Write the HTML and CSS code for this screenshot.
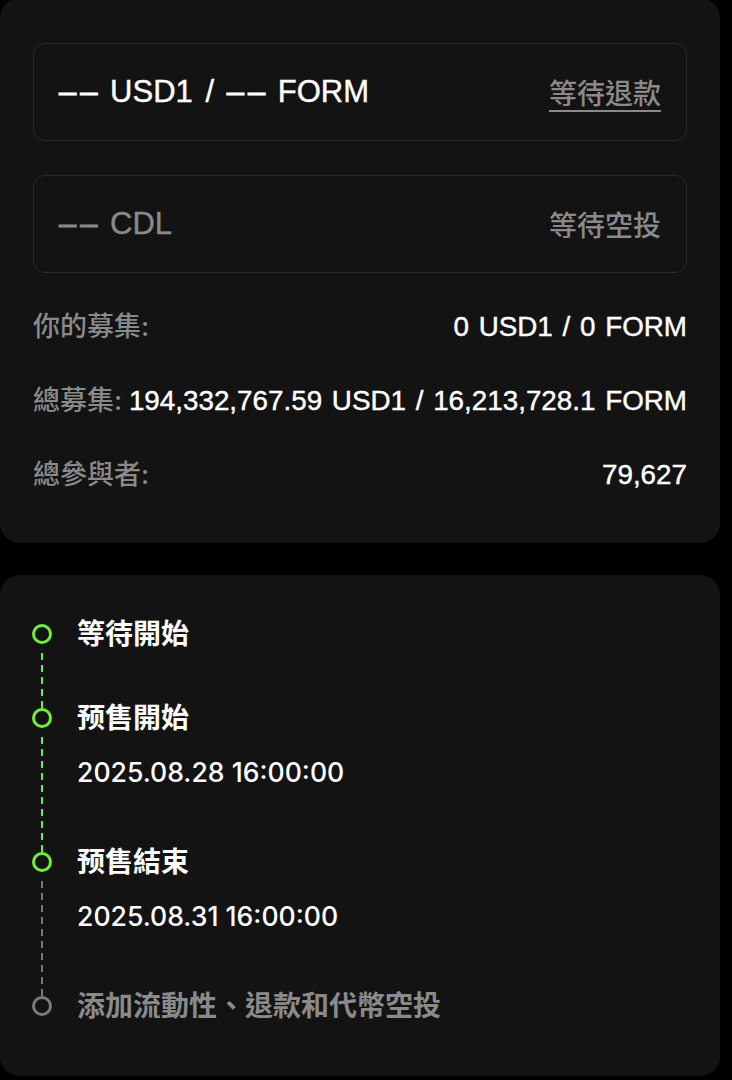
FILE: index.html
```html
<!DOCTYPE html>
<html lang="zh-Hant">
<head>
    <meta charset="UTF-8">
    <meta name="viewport" content="width=device-width, initial-scale=1.0">
    <title>Presale</title>
    <link rel="stylesheet" href="styles.css">
</head>
<body>
    <div class="card summary">
        <div class="claim-box">
            <span class="claim-amount"><span class="dash">––</span> USD1 / <span class="dash">––</span> FORM</span>
            <a href="#" class="claim-action link">等待退款</a>
        </div>
        <div class="claim-box">
            <span class="claim-amount muted"><span class="dash">––</span> CDL</span>
            <span class="claim-action">等待空投</span>
        </div>

        <div class="stats">
            <div class="stat-row">
                <span class="stat-label">你的募集:</span>
                <span class="stat-value">0 USD1 / 0 FORM</span>
            </div>
            <div class="stat-row">
                <span class="stat-label">總募集:</span>
                <span class="stat-value">194,332,767.59 USD1 / 16,213,728.1 FORM</span>
            </div>
            <div class="stat-row">
                <span class="stat-label">總參與者:</span>
                <span class="stat-value">79,627</span>
            </div>
        </div>
    </div>

    <div class="card timeline">
        <div class="step done">
            <div class="step-rail">
                <span class="dot"></span>
                <span class="line"></span>
            </div>
            <div class="step-body">
                <div class="step-title">等待開始</div>
            </div>
        </div>
        <div class="step done">
            <div class="step-rail">
                <span class="dot"></span>
                <span class="line"></span>
            </div>
            <div class="step-body">
                <div class="step-title">预售開始</div>
                <div class="step-date">2025.08.28 16:00:00</div>
            </div>
        </div>
        <div class="step current">
            <div class="step-rail">
                <span class="dot"></span>
                <span class="line"></span>
            </div>
            <div class="step-body">
                <div class="step-title">预售結束</div>
                <div class="step-date">2025.08.31 16:00:00</div>
            </div>
        </div>
        <div class="step pending">
            <div class="step-rail">
                <span class="dot"></span>
            </div>
            <div class="step-body">
                <div class="step-title">添加流動性、退款和代幣空投</div>
            </div>
        </div>
    </div>
</body>
</html>
```

FILE: styles.css
```css
body {
    font-family: Inter, "Noto Sans CJK TC", sans-serif;
    background-color: #000;
    color: #fff;
    margin: 0;
    padding: 0;
    width: 720px;
}
.card {
    background-color: #131313;
    border-radius: 20px;
}
.summary {
    margin-top: -2px;
    padding: 45px 33px 51px;
}
.claim-box {
    display: flex;
    align-items: center;
    justify-content: space-between;
    height: 96px;
    padding: 0 25px;
    border: 1px solid #2b2b2b;
    border-radius: 12px;
}
.claim-box + .claim-box {
    margin-top: 34px;
}
.claim-amount {
    font-family: "Liberation Sans", "Noto Sans CJK TC", sans-serif;
    font-size: 31px;
    word-spacing: 4px;
    -webkit-text-stroke: 0.4px #fff;
}
.dash {
    letter-spacing: 4px;
    margin-right: -4px;
    -webkit-text-stroke: 1px #fff;
}
.claim-amount.muted,
.claim-amount.muted .dash {
    color: #8a8a8a;
    -webkit-text-stroke-color: #8a8a8a;
}
.claim-action {
    font-size: 28px;
    font-weight: 500;
    color: #8a8a8a;
}
.link {
    text-decoration: underline;
    text-underline-offset: 6px;
    text-decoration-thickness: 2px;
}
.stats {
    margin-top: 37px;
    display: flex;
    flex-direction: column;
    gap: 40px;
}
.stat-row {
    display: flex;
    justify-content: space-between;
    align-items: center;
    gap: 6px;
    line-height: 34px;
}
.stat-label {
    font-size: 27px;
    font-weight: 500;
    color: #8a8a8a;
    white-space: nowrap;
}
.stat-value {
    font-family: "Liberation Sans", sans-serif;
    font-size: 27.8px;
    word-spacing: 2px;
    -webkit-text-stroke: 0.4px #fff;
    white-space: nowrap;
}
.timeline {
    margin-top: 32px;
    padding: 49px 32px 60px;
}
.step {
    display: grid;
    grid-template-columns: 20px 1fr;
    column-gap: 25px;
}
.step-rail {
    display: flex;
    flex-direction: column;
    align-items: center;
}
.dot {
    box-sizing: border-box;
    width: 20px;
    height: 20px;
    border: 3px solid #6cf03a;
    border-radius: 50%;
    flex-shrink: 0;
}
.line {
    flex: 1;
    width: 2px;
    margin-top: 4px;
    background: repeating-linear-gradient(to top, #6cf03a 0, #6cf03a 7px, transparent 7px, transparent 12px);
}
.current .line {
    background: repeating-linear-gradient(to top, #7a7a7a 0, #7a7a7a 7px, transparent 7px, transparent 12px);
}
.step-body {
    padding-bottom: 64px;
}
.step-title {
    font-size: 28px;
    font-weight: 700;
    line-height: 20px;
}
.step-date {
    margin-top: 34px;
    margin-bottom: 6px;
    font-size: 26.6px;
    font-weight: 500;
    line-height: 20px;
}
.pending .dot {
    border-color: #7a7a7a;
}
.pending .step-title {
    color: #8a8a8a;
}
.pending .step-body {
    padding-bottom: 0;
}
```
